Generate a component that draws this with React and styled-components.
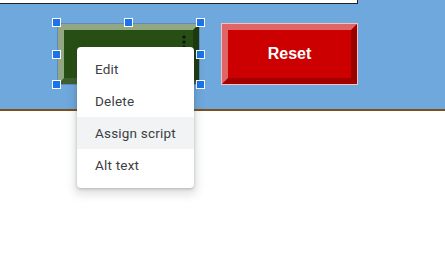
import React from 'react';
import styled, { createGlobalStyle } from 'styled-components';

const GlobalStyle = createGlobalStyle`
  html, body {
    margin: 0;
    padding: 0;
    background: #ffffff;
    font-family: Roboto, "Liberation Sans", Arial, sans-serif;
  }
`;

const Page = styled.div`
  min-height: 259px;
  display: flex;
  flex-direction: column;
`;

const Canvas = styled.div`
  background: #6fa8dc;
  height: 109px;
  border-bottom: 2px solid #7f4f1c;
  display: flex;
  flex-direction: column;
  position: relative;
  z-index: 1;
`;

const Sheet = styled.div`
  flex: 1;
  background: #fff;
`;

const TitleBox = styled.div`
  width: 357px;
  height: 3px;
  background: #ffffff;
  border-right: 1px solid #222;
  border-bottom: 1px solid #222;
`;

const ButtonRow = styled.div`
  display: flex;
  gap: 23px;
  margin-top: 20px;
  padding-left: 58px;
`;

const Bevel = styled.div`
  box-sizing: border-box;
  width: ${p => p.$w}px;
  height: 60px;
  border-style: solid;
  border-width: 6px;
  border-color: ${p => p.$light} ${p => p.$dark} ${p => p.$darker} ${p => p.$light};
  background: ${p => p.$fill};
  outline: 1px solid ${p => p.$edge};
  display: flex;
  align-items: center;
  justify-content: center;
  color: #fff;
  font-family: "Liberation Sans", Arial, sans-serif;
  font-weight: bold;
  font-size: 16px;
  position: relative;
`;

const Selection = styled.div`
  position: relative;
`;

const Handle = styled.span`
  position: absolute;
  width: 7px;
  height: 7px;
  background: #1a73e8;
  border: 1px solid #fff;
  left: ${p => p.$x}px;
  top: ${p => p.$y}px;
  z-index: 2;
`;

const Kebab = styled.svg`
  position: absolute;
  right: 6px;
  top: 2px;
`;

const Menu = styled.ul`
  position: absolute;
  left: 19px;
  top: 23px;
  width: 117px;
  margin: 0;
  padding: 6px 0 7px;
  list-style: none;
  background: #fff;
  border-radius: 4px;
  box-shadow: 0 1px 3px rgba(60, 64, 67, 0.3), 0 4px 8px 3px rgba(60, 64, 67, 0.15);
  z-index: 3;
`;

const MenuItem = styled.li`
  height: 32px;
  line-height: 32px;
  padding-left: 18px;
  font-size: 13.5px;
  color: #3c4043;
  letter-spacing: 0.2px;
  background: ${p => (p.$active ? '#f1f3f4' : 'transparent')};
`;

const handles = [
  [-6, -6], [66, -6], [138, -6],
  [-6, 26], [138, 26],
  [-6, 56], [138, 56],
];

const items = ['Edit', 'Delete', 'Assign script', 'Alt text'];

const App = () => (
  <Page>
    <GlobalStyle />
    <Canvas>
      <TitleBox />
      <ButtonRow>
        <Selection>
          <Bevel $w={141} $fill="#274e13" $light="#93a882" $dark="#1d3a0e" $darker="#3e5f2e" $edge="#5b8bbf">
            <Kebab width="6" height="18" viewBox="0 0 6 18">
              <circle cx="3" cy="5" r="1.6" fill="#111" />
              <circle cx="3" cy="10" r="1.6" fill="#111" />
              <circle cx="3" cy="15" r="1.6" fill="#111" />
            </Kebab>
          </Bevel>
          {handles.map(([x, y], i) => (
            <Handle key={i} $x={x} $y={y} />
          ))}
          <Menu>
            {items.map(t => (
              <MenuItem key={t} $active={t === 'Assign script'}>{t}</MenuItem>
            ))}
          </Menu>
        </Selection>
        <Bevel $w={135} $fill="#cc0000" $light="#e06666" $dark="#990000" $darker="#a30000" $edge="#f4c2c2">
          Reset
        </Bevel>
      </ButtonRow>
    </Canvas>
    <Sheet />
  </Page>
);

export default App;
